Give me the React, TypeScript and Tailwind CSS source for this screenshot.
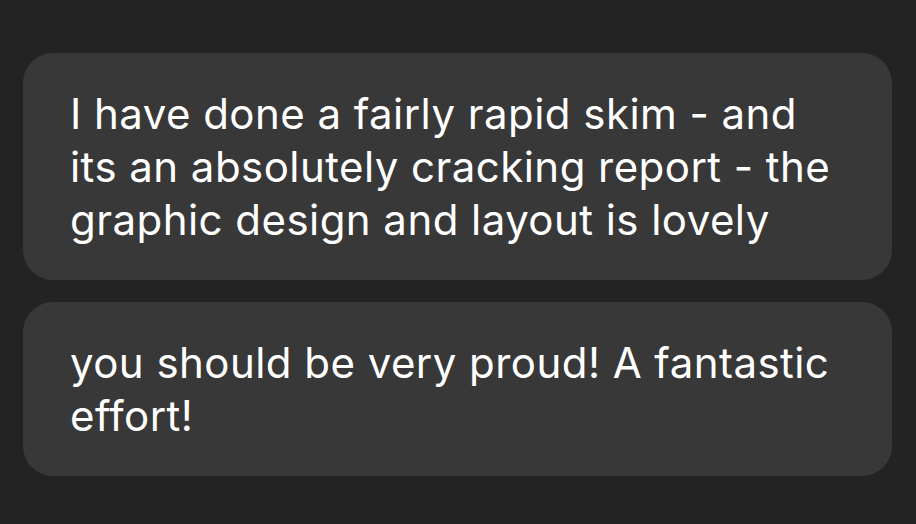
import React from "react";

const messages = [
  ["I have done a fairly rapid skim - and", "its an absolutely cracking report - the", "graphic design and layout is lovely"],
  ["you should be very proud! A fantastic", "effort!"],
];

const App: React.FC = () => {
  return (
    <div className="w-[916px] h-[524px] bg-[#232323] pt-[53px] pl-[23px] pr-[24px] flex flex-col gap-[22px] font-['Inter',sans-serif] text-white">
      {messages.map((lines, i) => (
        <div key={i} className="bg-[#383838] rounded-[30px] px-[47px] pt-[34px] pb-[34px]">
          <p className="text-[42px] leading-[53px] tracking-[0.45px]">
            {lines.map((line, j) => (
              <span key={j} className="block">
                {line}
              </span>
            ))}
          </p>
        </div>
      ))}
    </div>
  );
};

export default App;
